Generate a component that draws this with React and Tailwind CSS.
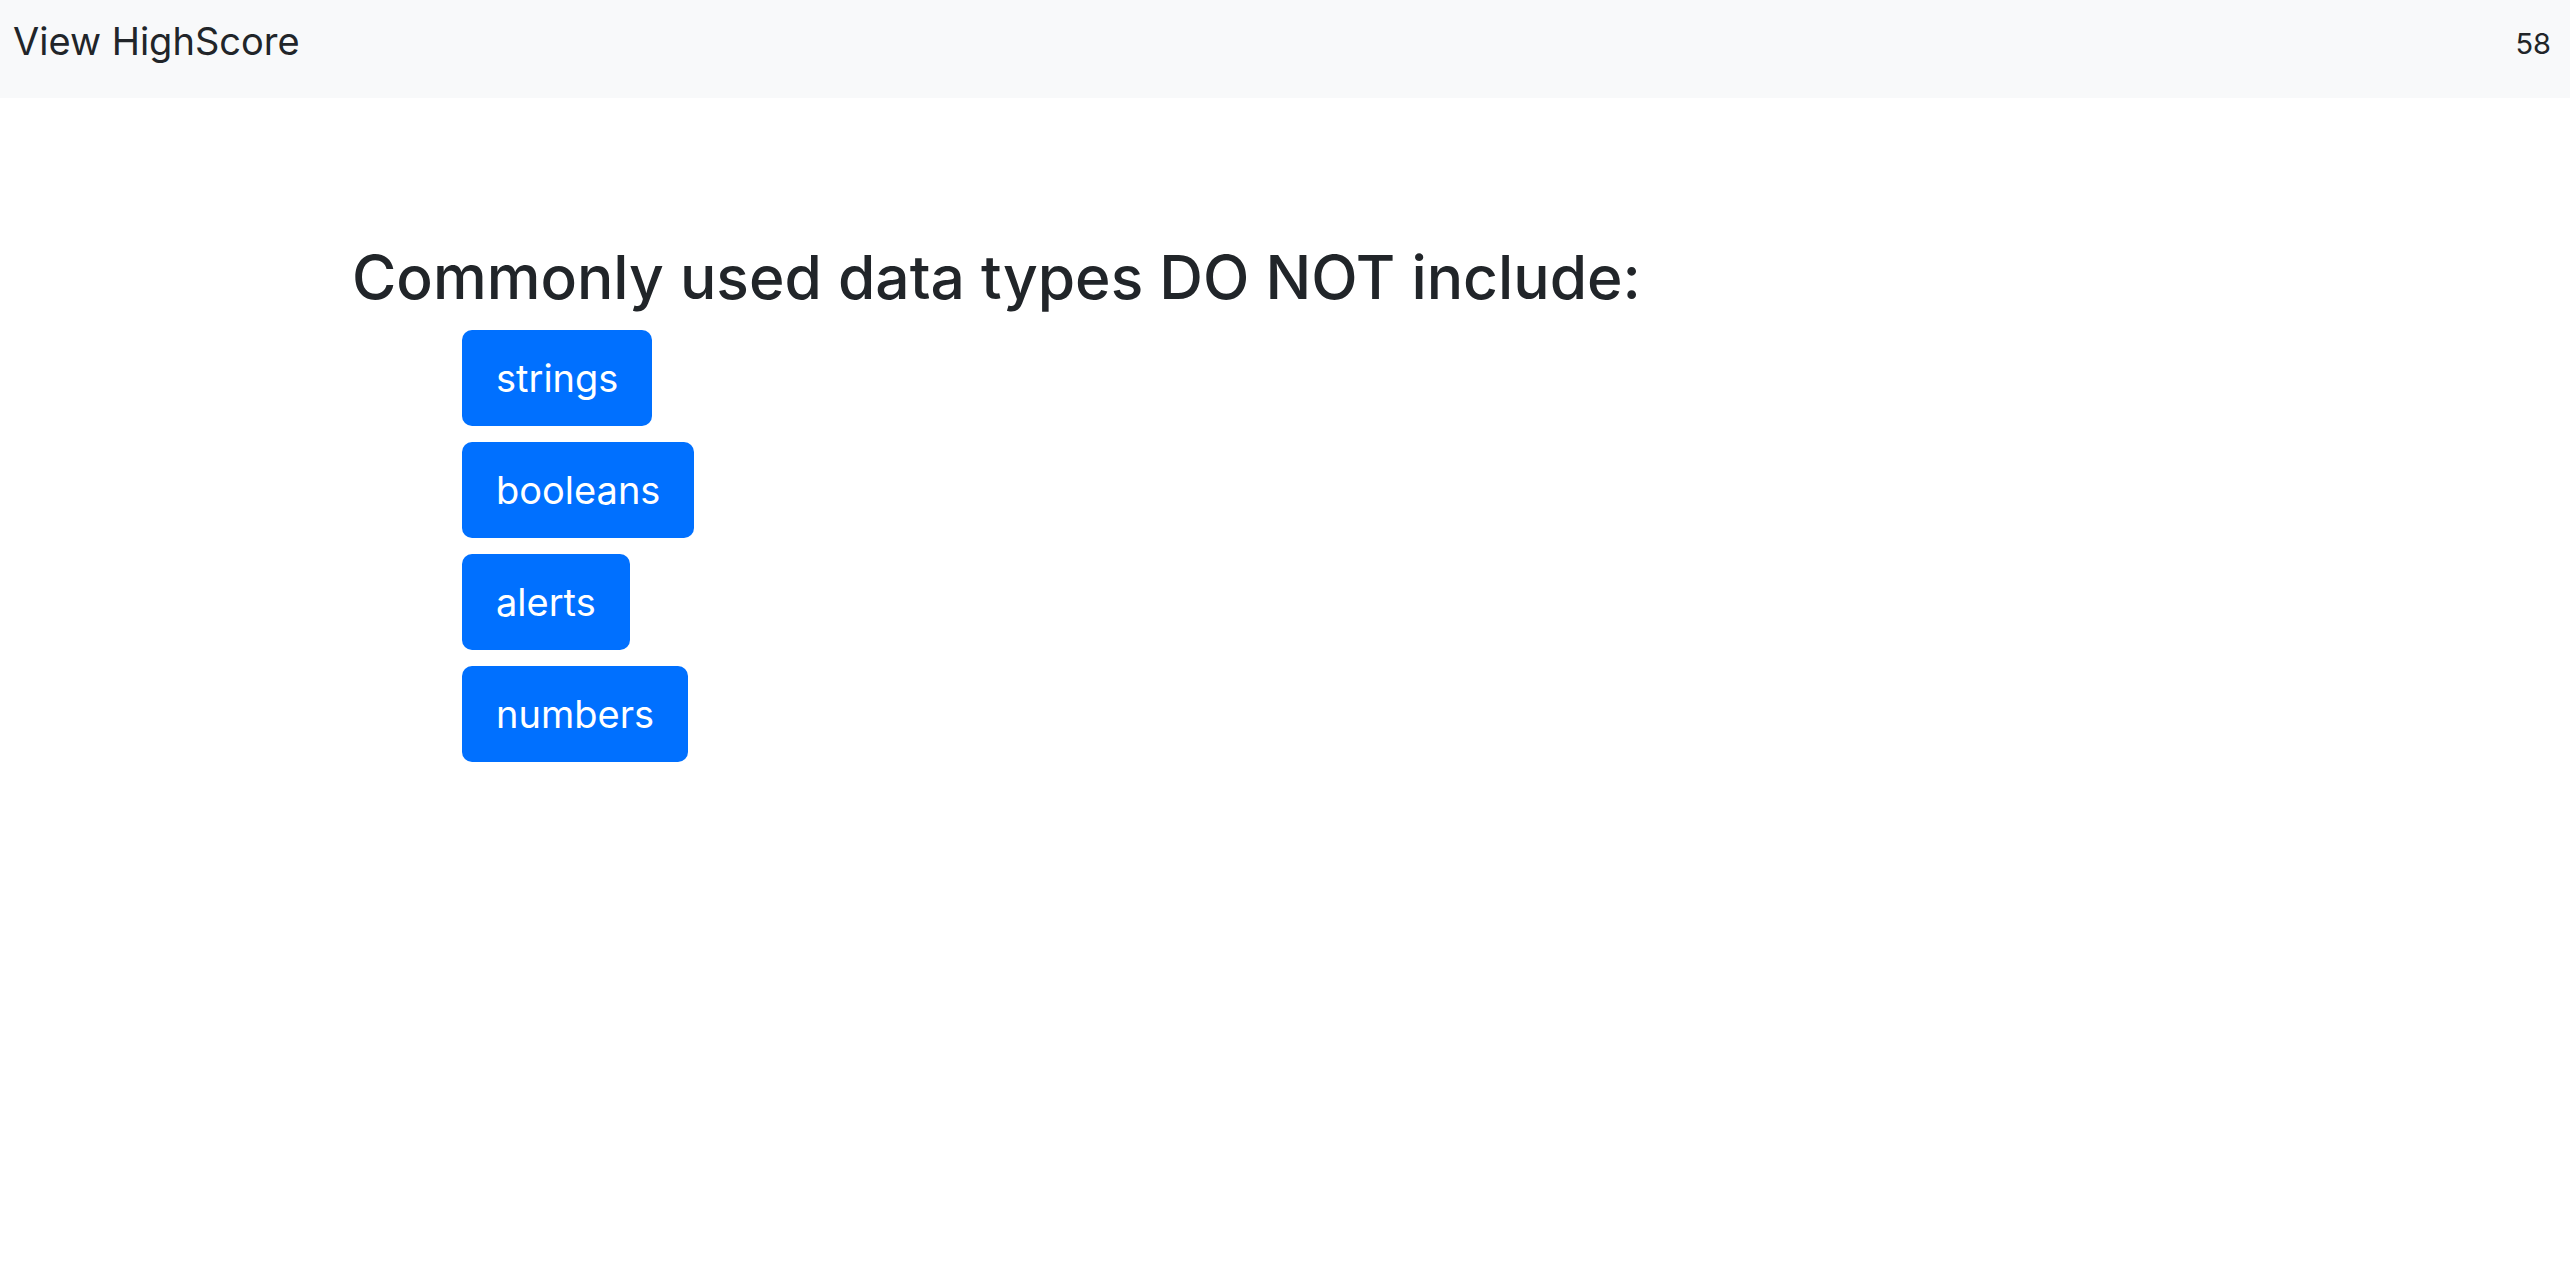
export default function App() {
  const opts = ["strings", "booleans", "alerts", "numbers"];
  return (
    <div className="min-h-[1270px] bg-white" style={{ fontFamily: "Inter, 'Noto Sans', sans-serif" }}>
      <header className="h-[98px] bg-[#f8f9fa] flex items-start justify-between pl-[13px] pr-[19px]">
        <span className="text-[38px] leading-none text-[#212529] mt-[22px]">View HighScore</span>
        <span className="text-[29px] leading-none text-[#212529] mt-[29px]">58</span>
      </header>
      <main className="pl-[352px] pt-[139px]">
        <h2 className="text-[60.5px] leading-[80px] text-[#212529] font-medium">Commonly used data types DO NOT include:</h2>
        <div className="flex flex-col items-start gap-[16px] pl-[110px] mt-[13px]">
          {opts.map((o) => (
            <button key={o} className="h-[96px] px-[34px] rounded-[10px] bg-[#0070ff] text-white text-[38px] leading-none">
              {o}
            </button>
          ))}
        </div>
      </main>
    </div>
  );
}
